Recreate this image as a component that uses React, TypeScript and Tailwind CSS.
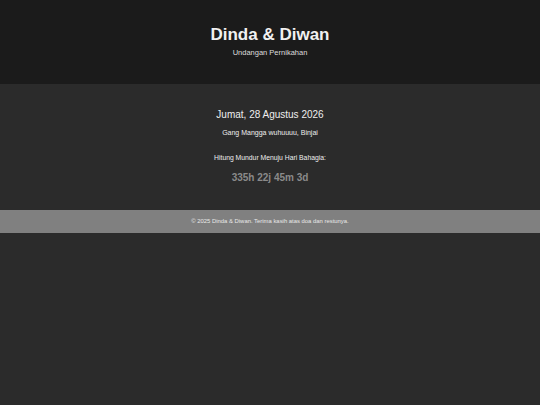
export default function App() {
  return (
    <div className="min-h-screen bg-[#2b2b2b] text-[#eeeeee] font-['Liberation_Sans',Arial,sans-serif]">
      {/* Header */}
      <header className="bg-[#1b1b1b] pt-[26px] pb-[27px] text-center">
        <h1 className="text-[17px] font-bold leading-none text-[#f0f0f0]">Dinda &amp; Diwan</h1>
        <p className="mt-[6px] text-[7.5px] leading-none text-[#dddddd]">Undangan Pernikahan</p>
      </header>

      {/* Event details */}
      <main className="pt-[26px] pb-[27px] text-center">
        <p className="text-[10px] leading-none">Jumat, 28 Agustus 2026</p>
        <p className="mt-[9px] text-[7px] leading-none">Gang Mangga wuhuuuu, Binjai</p>

        <div className="mt-[19px]">
          <p className="text-[6.8px] leading-none">Hitung Mundur Menuju Hari Bahagia:</p>
          <p className="mt-[12px] text-[10px] font-bold leading-none text-[#8a8a8a]">335h 22j 45m 3d</p>
        </div>
      </main>

      {/* Footer */}
      <footer className="flex h-[23px] items-center justify-center bg-[#808080]">
        <p className="text-[5.9px] leading-none text-[#e8e8e8]">
          © 2025 Dinda &amp; Diwan. Terima kasih atas doa dan restunya.
        </p>
      </footer>
    </div>
  );
}
